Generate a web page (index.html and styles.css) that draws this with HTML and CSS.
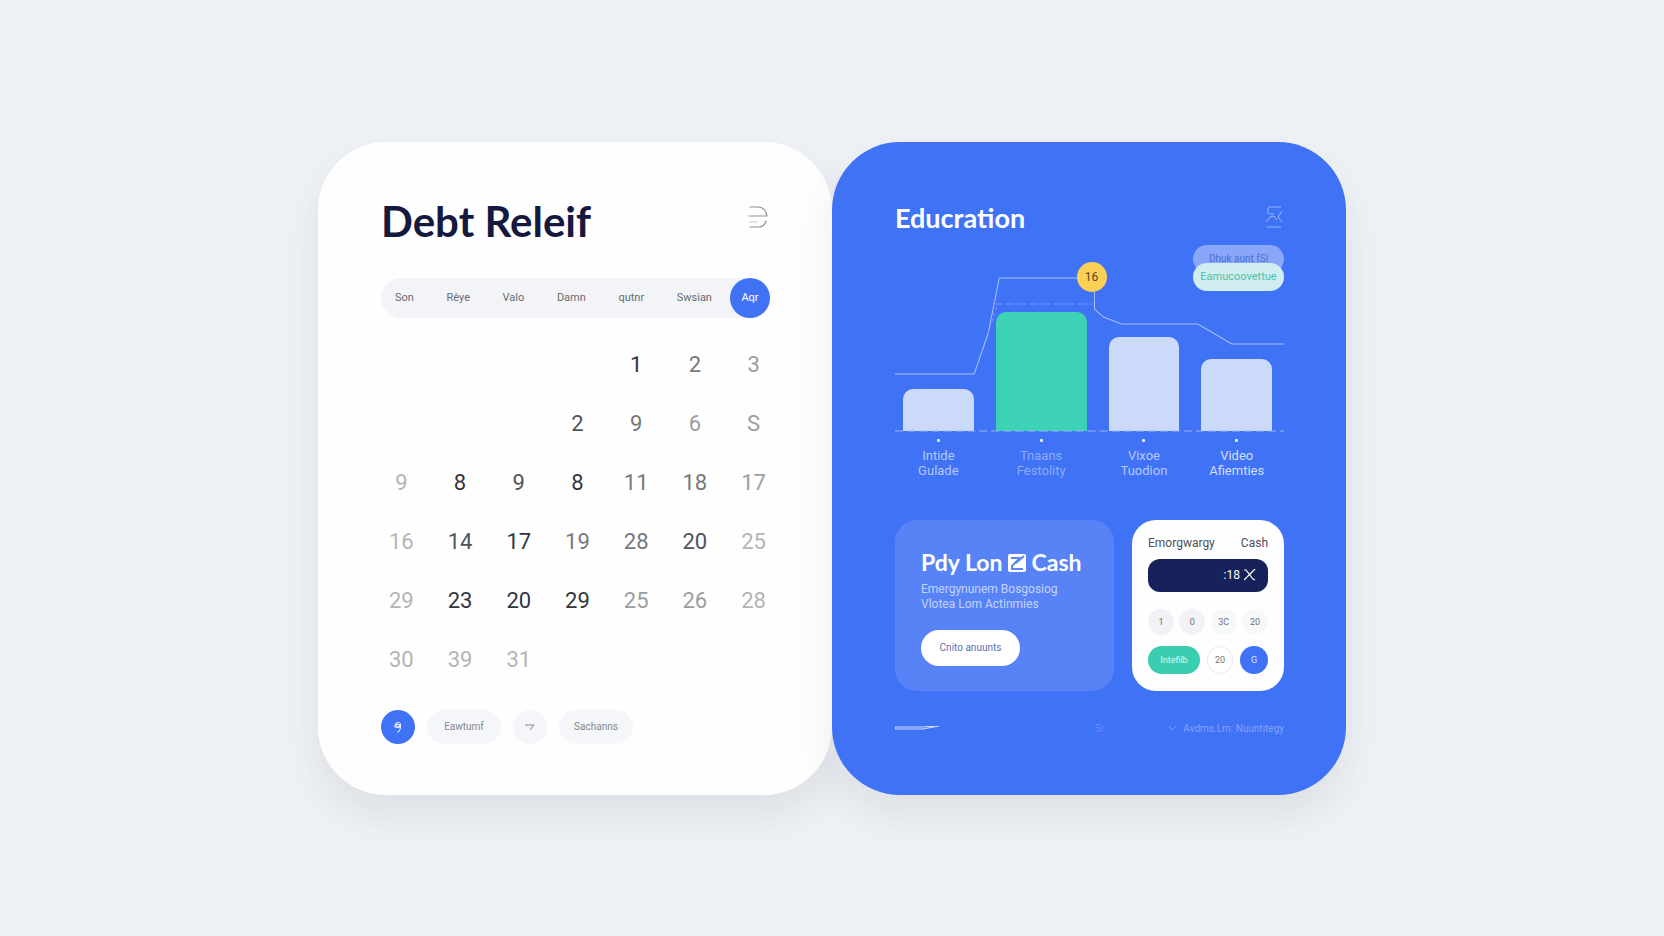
FILE: index.html
```html
<!DOCTYPE html>
<html lang="en">
<head>
    <meta charset="UTF-8">
    <meta name="viewport" content="width=device-width, initial-scale=1.0">
    <title>Debt Releif</title>
    <link rel="stylesheet" href="styles.css">
</head>
<body>

    <main class="board">
        <section class="card calendarCard">
            <header class="cardHeader">
                <h1>Debt Releif</h1>
                <svg class="menuIcon" width="20" height="22" viewBox="0 0 20 22" fill="none" stroke="#8f9298" stroke-width="1.2" stroke-linecap="round">
                    <path d="M2 1h8c5 0 8 4 9 9H1"/>
                    <path d="M2 16h7" stroke="#c9cbd0"/>
                    <path d="M2 21h8c4 0 7-2 8-6"/>
                </svg>
            </header>

            <nav class="tabs">
                <div class="tabList">
                    <button type="button">Son</button>
                    <button type="button">Rêye</button>
                    <button type="button">Valo</button>
                    <button type="button">Damn</button>
                    <button type="button">qutnr</button>
                    <button type="button">Swsian</button>
                </div>
                <button type="button" class="tabActive">Aqr</button>
            </nav>

            <table class="days">
                <tr><td></td><td></td><td></td><td></td><td class="dark">1</td><td>2</td><td class="mid">3</td></tr>
                <tr><td></td><td></td><td></td><td class="dim">2</td><td>9</td><td class="mid">6</td><td class="mid">S</td></tr>
                <tr><td class="light">9</td><td class="dark">8</td><td class="dim">9</td><td class="dark">8</td><td>11</td><td>18</td><td class="mid">17</td></tr>
                <tr><td class="light">16</td><td class="dim">14</td><td class="dark">17</td><td>19</td><td>28</td><td class="dim">20</td><td class="light">25</td></tr>
                <tr><td class="light">29</td><td class="dark">23</td><td class="dark">20</td><td class="dark">29</td><td class="mid">25</td><td class="mid">26</td><td class="light">28</td></tr>
                <tr><td class="light">30</td><td class="light">39</td><td class="light">31</td><td></td><td></td><td></td><td></td></tr>
            </table>

            <footer class="actions">
                <button type="button" class="round roundBlue" aria-label="Pin">
                    <svg width="8" height="12" viewBox="0 0 10 14" fill="none" stroke="#fff" stroke-width="1.2">
                        <path d="M3 2l3-1 2 2v6l-2 4H4M1 5l2-3v5l4 1M1 5v2h6V4H4"/>
                    </svg>
                </button>
                <button type="button" class="pill">Eawtumf</button>
                <button type="button" class="round" aria-label="More">
                    <svg width="10" height="8" viewBox="0 0 10 8" fill="none" stroke="#85888f" stroke-width="1">
                        <path d="M0 2h9L5 7"/>
                    </svg>
                </button>
                <button type="button" class="pill">Sachanns</button>
            </footer>
        </section>

        <section class="card educationCard">
            <header class="cardHeader">
                <h2>Educration</h2>
                <svg class="scanIcon" width="19" height="22" viewBox="0 0 19 22" fill="none" stroke="#b9caff" stroke-width="1">
                    <path d="M3 1h13M2 21h14" opacity=".7"/>
                    <path d="M3 2v6M4 8h5M1 16l4-5 4-1M9 10l3 4M17 5l-4 6 4 5" stroke-width=".8"/>
                </svg>
            </header>

            <div class="chart">
                <div class="bars">
                    <div class="bar" style="height: 42px"></div>
                    <div class="bar barMain" style="height: 119px"></div>
                    <div class="bar" style="height: 94px"></div>
                    <div class="bar" style="height: 72px"></div>
                </div>
                <svg class="trend" viewBox="0 0 388 193" preserveAspectRatio="none" fill="none">
                    <path d="M0 136h79l14-41 11-55h78" stroke="#a9c0fb"/>
                    <path d="M199 53v18l9 8 18 7h76l34 20h52" stroke="#a9c0fb"/>
                    <path d="M98 66h99" stroke="#7396f8" stroke-dasharray="9 3"/>
                    <path d="M93 95l9-28" stroke="#7396f8" stroke-dasharray="3 3"/>
                    <path d="M0 193h388" stroke="#9bb4fa" stroke-dasharray="8 4"/>
                </svg>
                <span class="marker">16</span>
                <div class="tags">
                    <span class="tag tagBack">Dhuk aunt fSi</span>
                    <span class="tag tagFront">Eamucoovettue</span>
                </div>
            </div>
            <div class="labels">
                <span>Intide<br>Gulade</span>
                <span class="labelMain">Tnaans<br>Festolity</span>
                <span>Vixoe<br>Tuodion</span>
                <span class="labelBright">Video<br>Afiemties</span>
            </div>

            <div class="panels">
                <article class="promo">
                    <h3>Pdy Lon
                        <svg width="18" height="18" viewBox="0 0 18 18">
                            <rect width="18" height="18" rx="2" fill="#fff"/>
                            <path d="M3 4h9L4 12v3h11M8 9l8-7" fill="none" stroke="#5a86f7" stroke-width="2"/>
                        </svg>
                        Cash</h3>
                    <p>Emergynunem Bosgosiog<br>Vlotea Lom Actinmies</p>
                    <button type="button">Cnito anuunts</button>
                </article>

                <article class="calculator">
                    <div class="calcTitle"><span>Emorgwargy</span><span>Cash</span></div>
                    <div class="display">
                        <span>:18</span>
                        <svg width="12" height="12" viewBox="0 0 12 12" fill="none" stroke="#fff" stroke-width="1.2"><path d="M0 1h2l7 9 2 1M11 0L6 5 0 11"/></svg>
                    </div>
                    <div class="keys">
                        <button type="button">1</button>
                        <button type="button">0</button>
                        <button type="button" class="keyPale">3C</button>
                        <button type="button" class="keyPale">20</button>
                    </div>
                    <div class="keys keysBottom">
                        <button type="button" class="keyGreen">Intefilb</button>
                        <button type="button" class="keyWhite">20</button>
                        <button type="button" class="keyBlue">G</button>
                    </div>
                </article>
            </div>

            <footer class="footnote">
                <svg width="46" height="5" viewBox="0 0 46 5" fill="none" stroke="#cfdcff"><path d="M0 1h26l18-1-16 3H0z"/></svg>
                <span class="faint">5r</span>
                <a href="#"><svg width="9" height="7" viewBox="0 0 9 7" fill="none" stroke="currentColor"><path d="M1 1l3 4 4-4"/></svg>Avdms.Lm: Nuuntitegy</a>
            </footer>
        </section>
    </main>

</body>
</html>
```

FILE: styles.css
```css
* {
    box-sizing: border-box;
}

body {
    margin: 0;
    min-height: 100vh;
    display: flex;
    justify-content: center;
    align-items: center;
    background-color: #eef1f5;
    font-family: Roboto, 'Liberation Sans', sans-serif;
    color: #16193f;
}

h1, h2, h3, p {
    margin: 0;
}

h1, h2, h3 {
    font-family: Lato, sans-serif;
    font-weight: 700;
}

button {
    font-family: inherit;
    border: none;
    padding: 0;
    cursor: pointer;
}

.board {
    display: grid;
    grid-template-columns: 1fr 1fr;
    width: 100%;
    max-width: 1028px;
}

.card {
    min-width: 0;
    border-radius: 68px;
    padding: 55px 62px 51px 63px;
    box-shadow: 0 20px 40px rgba(70, 80, 100, 0.1);
}

.calendarCard {
    background-color: #fefefe;
}

.educationCard {
    background-color: #4072f6;
    color: #fff;
}

.cardHeader {
    display: flex;
    justify-content: space-between;
}

.cardHeader svg {
    margin-top: 9px;
}

.menuIcon {
    margin-right: 2px;
}

h1 {
    font-size: 42px;
    line-height: 48px;
}

h2 {
    font-size: 27px;
    line-height: 41px;
}

/* calendar */
.tabs {
    display: flex;
    height: 40px;
    margin-top: 33px;
    border-radius: 20px;
    background-color: #f2f4f8;
}

.tabList {
    flex: 1;
    display: flex;
    justify-content: space-between;
    padding: 0 18px 0 14px;
}

.tabs button {
    font-size: 11px;
    color: #686b73;
    background: none;
}

.tabs .tabActive {
    width: 40px;
    border-radius: 50%;
    background-color: #4072f6;
    color: #fff;
}

.days {
    width: calc(100% + 22px);
    margin: 17px -9px 0;
    border-collapse: collapse;
    table-layout: fixed;
}

.days td {
    height: 59px;
    padding: 0;
    text-align: center;
    font-size: 22px;
    color: #75787d;
}

.days .dark {
    color: #33363d;
}

.days .dim {
    color: #50535a;
}

.days .mid {
    color: #9b9da1;
}

.days .light {
    color: #b3b5b8;
}

.actions {
    display: flex;
    gap: 12px;
    margin-top: 21px;
}

.actions button {
    height: 34px;
    border-radius: 17px;
    background-color: #f4f6f9;
}

.round {
    width: 34px;
    display: flex;
    align-items: center;
    justify-content: center;
}

.actions .roundBlue {
    background-color: #4072f6;
}

.pill {
    width: 74px;
    font-size: 10px;
    color: #85888f;
}

/* chart */
.chart {
    position: relative;
    height: 193px;
    display: flex;
    flex-direction: column;
    justify-content: flex-end;
}

.bars, .labels {
    display: flex;
    gap: 22px;
    padding: 0 12px 0 8px;
}

.bars {
    align-items: flex-end;
}

.bar {
    flex: 70;
    border-radius: 10px 10px 0 0;
    background-color: #ccdaf9;
}

.barMain {
    flex: 90;
    background-color: #3dd1b5;
}

.trend {
    position: absolute;
    inset: 0;
    width: 100%;
    height: 100%;
    overflow: visible;
}

.marker {
    position: absolute;
    top: 24px;
    left: 50%;
    width: 30px;
    line-height: 30px;
    margin-left: -13px;
    border-radius: 50%;
    background-color: #fccf57;
    color: #56491f;
    font-size: 12px;
    text-align: center;
}

.tags {
    position: absolute;
    top: 7px;
    right: 0;
    width: 91px;
}

.tag {
    display: block;
    height: 28px;
    border-radius: 14px;
    font-size: 11px;
    line-height: 28px;
    text-align: center;
    white-space: nowrap;
}

.tagBack {
    background-color: #88a7f8;
    color: #4f6fd2;
    font-size: 10px;
}

.tagFront {
    position: relative;
    margin-top: -10px;
    background-color: #d0edf0;
    color: #4cc2aa;
}

.labels {
    padding-top: 8px;
    font-size: 13px;
    line-height: 15px;
    color: #b5c8fc;
    text-align: center;
}

.labels span {
    flex: 70 1 0;
    min-width: 0;
}

.labels span::before {
    content: "";
    display: block;
    width: 3px;
    height: 3px;
    margin: 0 auto 6px;
    border-radius: 1px;
    background-color: #e3ebff;
}

.labels .labelMain {
    flex-grow: 90;
    color: #8daafa;
}

.labels .labelBright {
    color: #d3dffe;
}

/* bottom panels */
.panels {
    display: flex;
    gap: 18px;
    margin-top: 42px;
}

.promo {
    flex: 1;
    border-radius: 22px;
    padding: 26px 24px 24px 26px;
    background-color: #5883f7;
}

.promo h3 {
    font-size: 23px;
    line-height: 32px;
    white-space: nowrap;
}

.promo h3 svg {
    vertical-align: -1px;
}

.promo p {
    margin-top: 4px;
    font-size: 12px;
    line-height: 15px;
    color: #c3d3fd;
    white-space: nowrap;
}

.promo button {
    width: 99px;
    height: 36px;
    margin-top: 18px;
    border-radius: 18px;
    background-color: #fff;
    color: #5b70b5;
    font-size: 10px;
}

.calculator {
    width: 152px;
    height: 171px;
    border-radius: 24px;
    padding: 14px 16px;
    background-color: #fefefe;
    color: #4d5058;
}

.calcTitle {
    display: flex;
    justify-content: space-between;
    font-size: 12px;
    line-height: 18px;
}

.display {
    display: flex;
    align-items: center;
    justify-content: flex-end;
    gap: 4px;
    height: 33px;
    margin-top: 7px;
    padding-right: 12px;
    border-radius: 12px;
    background-color: #162259;
    color: #fff;
    font-size: 12px;
}

.keys {
    display: flex;
    justify-content: space-between;
    margin-top: 17px;
}

.keys button {
    width: 26px;
    height: 26px;
    border-radius: 14px;
    background-color: #f1f2f6;
    color: #70737b;
    font-size: 9px;
}

.keys .keyPale {
    background-color: #f7f8fa;
}

.keysBottom {
    margin-top: 11px;
}

.keysBottom button {
    height: 28px;
}

.keys .keyGreen {
    width: 52px;
    background-color: #3acdb0;
    color: #d7f7f0;
}

.keys .keyWhite {
    border: 1px solid #e6e8ed;
    background-color: #fff;
}

.keys .keyBlue {
    width: 28px;
    background-color: #4072f6;
    color: #dbe5ff;
}

.footnote {
    display: flex;
    justify-content: space-between;
    align-items: center;
    margin-top: 29px;
    font-size: 10px;
    line-height: 18px;
}

.faint {
    margin-left: 90px;
    color: #668df8;
}

.footnote a {
    color: #83a3fa;
    text-decoration: none;
}

.footnote a svg {
    margin-right: 6px;
}
```
